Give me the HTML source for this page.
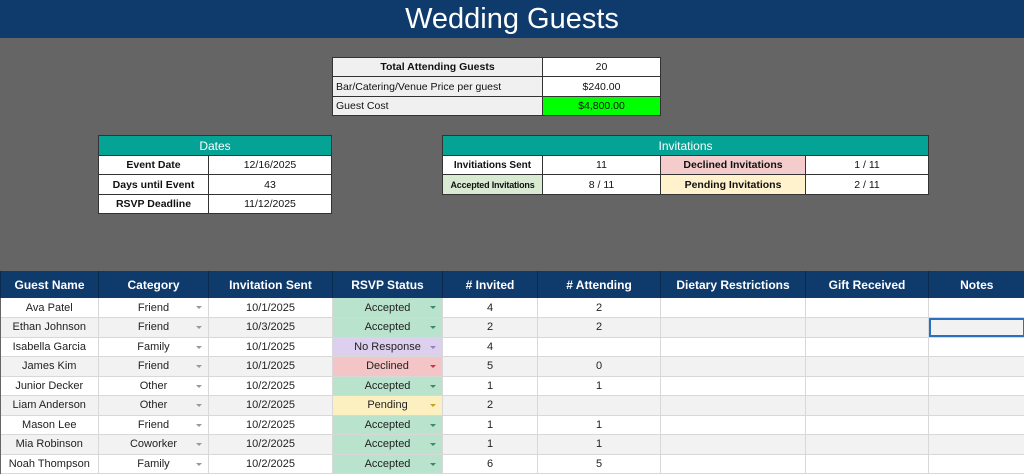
<!DOCTYPE html>
<html><head><meta charset="utf-8"><style>
*{margin:0;padding:0;box-sizing:border-box}
body{width:1024px;height:468px;overflow:hidden;background:#656565;font-family:"Liberation Sans",sans-serif;position:relative}
.top{position:absolute;left:0;top:0;width:1024px;height:38px;background:#0e3a6c;color:#fff;font-size:29px;text-align:center;line-height:38px}
.c{position:absolute;background:#fff;border:1px solid #333;font-size:10.5px;color:#111;display:flex;align-items:center;justify-content:center;white-space:nowrap;overflow:hidden}
.b{font-weight:bold}
.l{justify-content:flex-start;padding-left:3px}
.t{background:#05a396;color:#fff;font-size:12px}
table{position:absolute;left:0;top:271px;border-collapse:collapse;table-layout:fixed;width:1024px}
th{background:#0e3a6c;color:#fff;font-size:12px;height:27px;border-left:1px solid #0a2a50;font-weight:bold}
td{height:19.5px;font-size:11px;color:#222;text-align:center;border-right:1px solid #d8d8d8;border-bottom:1px solid #d8d8d8;position:relative;white-space:nowrap}
tr:nth-child(odd) td{background:#f2f2f2}
tr:nth-child(even) td{background:#fff}
.dd::after{content:"";position:absolute;right:6px;top:8px;border:3px solid transparent;border-top:3px solid #999}
td.ac{background:#b9e3cd!important}td.ac::after{border-top-color:#3a8a6a}
td.nr{background:#ddd0ef!important}td.nr::after{border-top-color:#9880c0}
td.dc{background:#f4c5c6!important}td.dc::after{border-top-color:#d03040}
td.pd{background:#fdf0c0!important}td.pd::after{border-top-color:#c9a020}
</style></head><body>
<div class="top">Wedding Guests</div>

<div class="c b" style="left:332px;top:57px;width:211px;height:20px;background:#f0f0f0">Total Attending Guests</div>
<div class="c" style="left:542px;top:57px;width:119px;height:20px">20</div>
<div class="c l" style="left:332px;top:76px;width:211px;height:21px;background:#f0f0f0">Bar/Catering/Venue Price per guest</div>
<div class="c" style="left:542px;top:76px;width:119px;height:21px">$240.00</div>
<div class="c l" style="left:332px;top:96px;width:211px;height:20px;background:#f0f0f0">Guest Cost</div>
<div class="c" style="left:542px;top:96px;width:119px;height:20px;background:#00ff00">$4,800.00</div>

<div class="c t" style="left:98px;top:135px;width:234px;height:21px">Dates</div>
<div class="c b" style="left:98px;top:155px;width:111px;height:20px">Event Date</div>
<div class="c" style="left:208px;top:155px;width:124px;height:20px">12/16/2025</div>
<div class="c b" style="left:98px;top:174px;width:111px;height:21px">Days until Event</div>
<div class="c" style="left:208px;top:174px;width:124px;height:21px">43</div>
<div class="c b" style="left:98px;top:194px;width:111px;height:20px">RSVP Deadline</div>
<div class="c" style="left:208px;top:194px;width:124px;height:20px">11/12/2025</div>

<div class="c t" style="left:442px;top:135px;width:487px;height:21px">Invitations</div>
<div class="c b" style="left:442px;top:155px;width:101px;height:20px;font-size:10px">Invitiations Sent</div>
<div class="c" style="left:542px;top:155px;width:119px;height:20px">11</div>
<div class="c b" style="left:660px;top:155px;width:146px;height:20px;background:#f4cccc">Declined Invitations</div>
<div class="c" style="left:805px;top:155px;width:124px;height:20px">1 / 11</div>
<div class="c b" style="left:442px;top:174px;width:101px;height:21px;background:#d9ead3;font-size:9px;letter-spacing:-0.2px">Accepted Invitations</div>
<div class="c" style="left:542px;top:174px;width:119px;height:21px">8 / 11</div>
<div class="c b" style="left:660px;top:174px;width:146px;height:21px;background:#fff2cc">Pending Invitations</div>
<div class="c" style="left:805px;top:174px;width:124px;height:21px">2 / 11</div>

<table>
<colgroup><col style="width:98px"><col style="width:110px"><col style="width:124px"><col style="width:110px"><col style="width:95px"><col style="width:123px"><col style="width:145px"><col style="width:123px"><col style="width:96px"></colgroup>
<tr><th>Guest Name</th><th>Category</th><th>Invitation Sent</th><th>RSVP Status</th><th># Invited</th><th># Attending</th><th>Dietary Restrictions</th><th>Gift Received</th><th>Notes</th></tr>
<tr><td>Ava Patel</td><td class="dd">Friend</td><td>10/1/2025</td><td class="dd ac">Accepted</td><td>4</td><td>2</td><td></td><td></td><td></td></tr>
<tr><td>Ethan Johnson</td><td class="dd">Friend</td><td>10/3/2025</td><td class="dd ac">Accepted</td><td>2</td><td>2</td><td></td><td></td><td style="outline:2px solid #2a6fc0;outline-offset:-2px;background:#f2f2f2"></td></tr>
<tr><td>Isabella Garcia</td><td class="dd">Family</td><td>10/1/2025</td><td class="dd nr">No Response</td><td>4</td><td></td><td></td><td></td><td></td></tr>
<tr><td>James Kim</td><td class="dd">Friend</td><td>10/1/2025</td><td class="dd dc">Declined</td><td>5</td><td>0</td><td></td><td></td><td></td></tr>
<tr><td>Junior Decker</td><td class="dd">Other</td><td>10/2/2025</td><td class="dd ac">Accepted</td><td>1</td><td>1</td><td></td><td></td><td></td></tr>
<tr><td>Liam Anderson</td><td class="dd">Other</td><td>10/2/2025</td><td class="dd pd">Pending</td><td>2</td><td></td><td></td><td></td><td></td></tr>
<tr><td>Mason Lee</td><td class="dd">Friend</td><td>10/2/2025</td><td class="dd ac">Accepted</td><td>1</td><td>1</td><td></td><td></td><td></td></tr>
<tr><td>Mia Robinson</td><td class="dd">Coworker</td><td>10/2/2025</td><td class="dd ac">Accepted</td><td>1</td><td>1</td><td></td><td></td><td></td></tr>
<tr><td>Noah Thompson</td><td class="dd">Family</td><td>10/2/2025</td><td class="dd ac">Accepted</td><td>6</td><td>5</td><td></td><td></td><td></td></tr>
</table>
</body></html>
